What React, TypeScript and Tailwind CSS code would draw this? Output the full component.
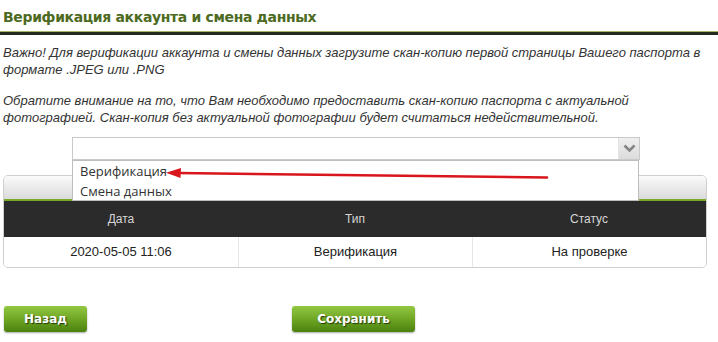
import React from 'react';

export default function App() {
  const rows = [{ date: "2020-05-05 11:06", type: "Верификация", status: "На проверке" }];

  return (
    <div className="w-[718px] h-[342px] bg-white relative overflow-hidden font-['Liberation_Sans',Arial,sans-serif]">
      <h1 className="pl-[3px] pt-[7px] leading-[20px] text-[14px] tracking-[-0.35px] font-bold text-[#4d6a22] font-['DejaVu_Sans',Verdana,sans-serif]">
        Верификация аккаунта и смена данных
      </h1>
      <div className="mt-[4px] border-t border-[#a7b56b] h-[4px] bg-[#262b1f]" />

      <div className="mt-[9px] px-[3px] italic text-[13px] leading-[17px] text-[#333]">
        <p>
          Важно! Для верификации аккаунта и смены данных загрузите скан-копию первой страницы Вашего паспорта в
          <br />
          формате .JPEG или .PNG
        </p>
        <p className="mt-[14px]">
          Обратите внимание на то, что Вам необходимо предоставить скан-копию паспорта с актуальной
          <br />
          фотографией. Скан-копия без актуальной фотографии будет считаться недействительной.
        </p>
      </div>

      {/* select with opened list */}
      <div className="relative mt-[11px] ml-[72px] w-[568px] h-[23px] border border-[#c9c9c9] bg-white flex justify-end">
        <div className="w-[21px] h-full bg-gradient-to-b from-[#efefef] to-[#dcdcdc] border-l border-[#e4e4e4] flex items-center justify-center">
          <svg width="13" height="9" viewBox="0 0 13 9">
            <path d="M1.5 1.5 L6.5 6.5 L11.5 1.5" fill="none" stroke="#858585" strokeWidth="2.6" />
          </svg>
        </div>
        <div className="absolute top-[22px] -left-px w-[567px] h-[41px] bg-white border border-[#bdbdbd] z-10 pl-[7px] text-[13px] leading-[20px] text-[#333] font-['Open_Sans',Arial,sans-serif]">
          <div>Верификация</div>
          <div>Смена данных</div>
        </div>
      </div>

      {/* table */}
      <div className="mt-[15px] ml-[3px] w-[704px] border border-[#cfcfcf] rounded-[5px] overflow-hidden">
        <div className="h-[23px] bg-gradient-to-b from-[#fbfbfb] to-[#dadada]" />
        <div className="h-[2px] bg-[#7aa92a]" />
        <div className="grid grid-cols-3 h-[36px] bg-[#2b2b2b] text-[12px] text-[#d6d6d6]">
          <div className="flex items-center justify-center">Дата</div>
          <div className="flex items-center justify-center">Тип</div>
          <div className="flex items-center justify-center">Статус</div>
        </div>
        {rows.map((r, i) => (
          <div key={i} className="grid grid-cols-3 h-[30px] text-[13px] text-[#222] bg-white">
            <div className="flex items-center justify-center">{r.date}</div>
            <div className="flex items-center justify-center border-l border-[#e6e6e6]">{r.type}</div>
            <div className="flex items-center justify-center border-l border-[#e6e6e6]">{r.status}</div>
          </div>
        ))}
      </div>

      <div className="mt-[38px] pl-[4px] flex gap-[205px]">
        <button className="w-[83px] h-[26px] rounded-[3px] bg-gradient-to-b from-[#93c843] via-[#6fa624] to-[#4a820f] shadow-[0_1px_2px_rgba(0,0,0,0.35)] text-white text-[12px] font-bold font-['DejaVu_Sans',Verdana,sans-serif] [text-shadow:1px_1px_1px_#1f3a05]">
          Назад
        </button>
        <button className="w-[123px] h-[26px] rounded-[3px] bg-gradient-to-b from-[#93c843] via-[#6fa624] to-[#4a820f] shadow-[0_1px_2px_rgba(0,0,0,0.35)] text-white text-[12px] font-bold font-['DejaVu_Sans',Verdana,sans-serif] [text-shadow:1px_1px_1px_#1f3a05]">
          Сохранить
        </button>
      </div>

      {/* red annotation arrow */}
      <svg className="absolute left-0 top-0 z-20 pointer-events-none" width="718" height="342">
        <line x1="178" y1="173" x2="547" y2="177.5" stroke="#d8161b" strokeWidth="2.6" strokeLinecap="round" />
        <polygon points="166,172.8 181,168 180.5,178" fill="#d8161b" />
      </svg>
    </div>
  );
}
